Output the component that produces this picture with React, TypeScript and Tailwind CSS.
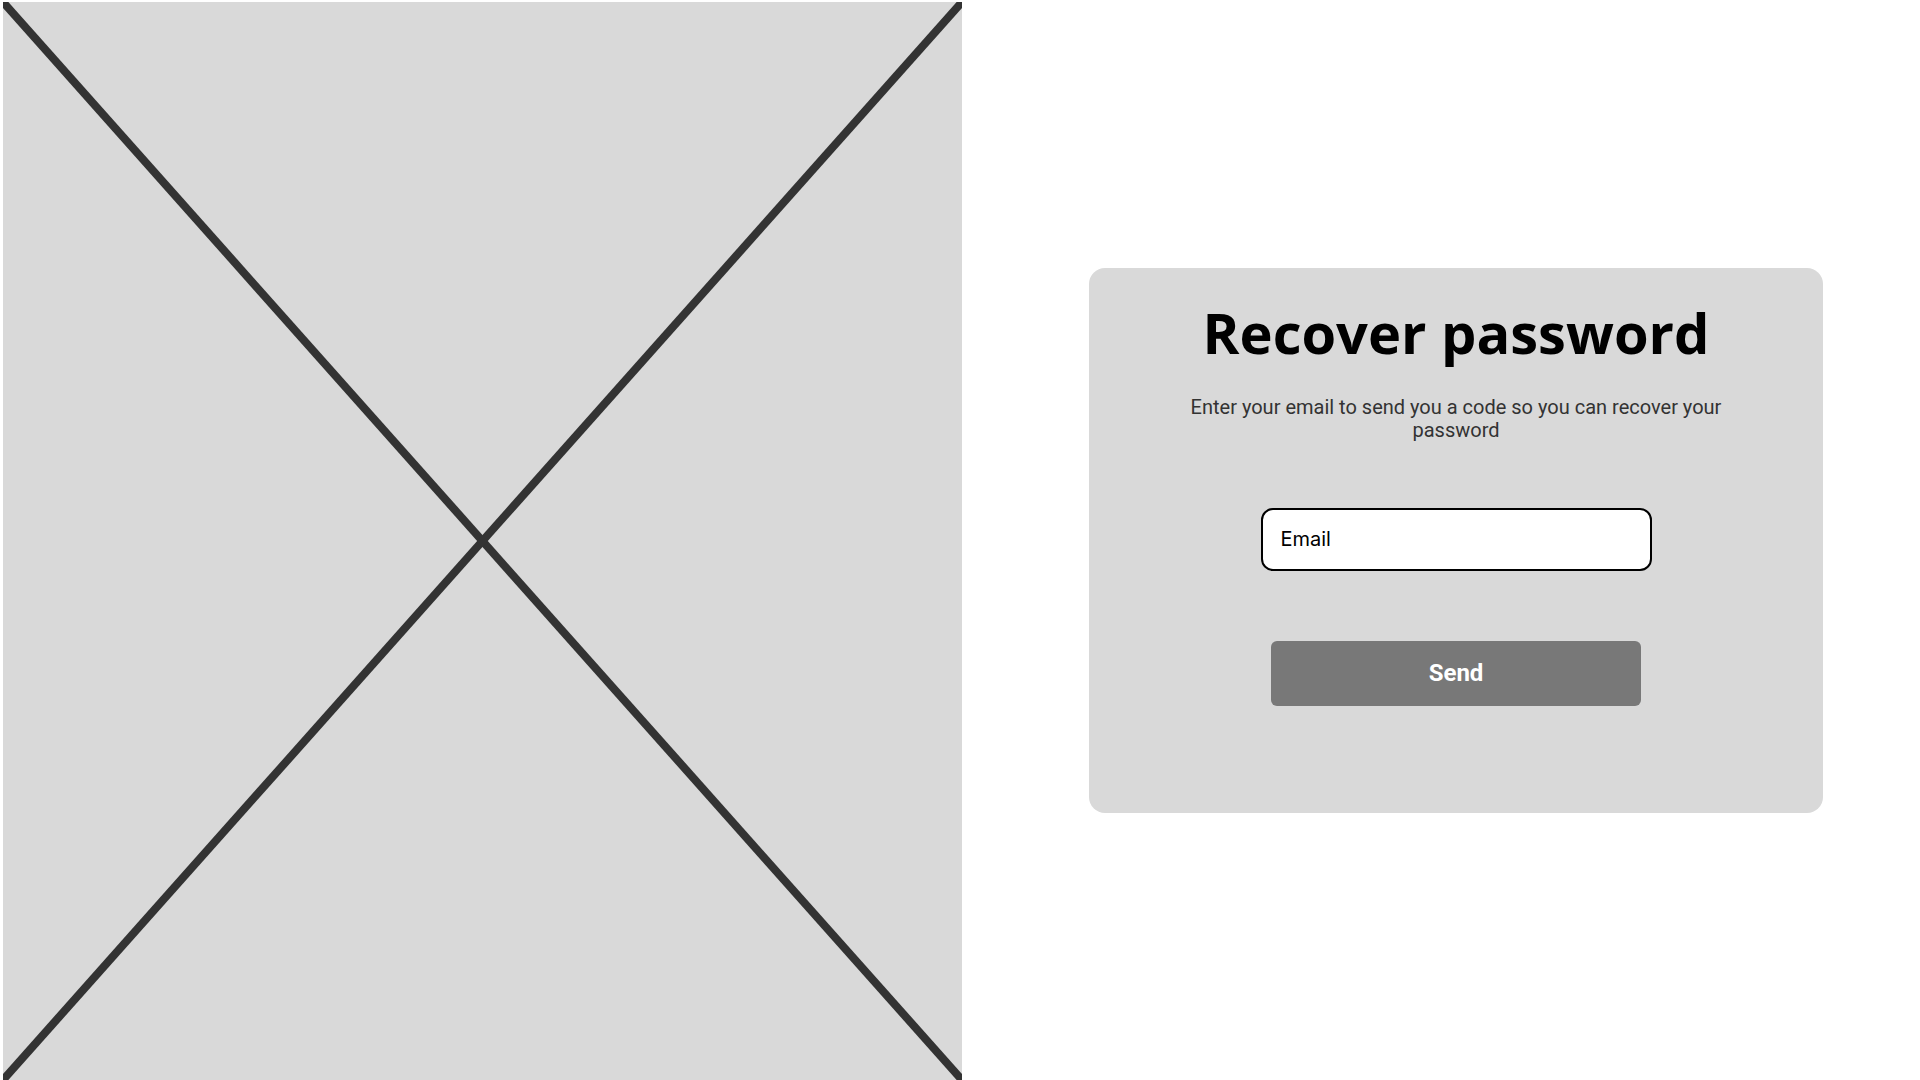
import React from "react";

export default function App() {
  return (
    <div className="flex h-[1080px] w-[1920px] bg-white overflow-hidden">
      <div className="ml-[3px] mt-[2px] h-[1078px] w-[959px] shrink-0 bg-[#d9d9d9] overflow-hidden">
        <svg width="959" height="1078" viewBox="0 0 959 1078" className="block">
          <line x1="0" y1="0" x2="959" y2="1078" stroke="#333333" strokeWidth="8" />
          <line x1="959" y1="0" x2="0" y2="1078" stroke="#333333" strokeWidth="8" />
        </svg>
      </div>
      <div className="flex flex-1 items-center pl-[127px]">
        <div className="flex h-[545px] w-[734px] flex-col items-center rounded-2xl bg-[#d9d9d9] pt-[36px]">
          <h1 className="font-['Open_Sans',sans-serif] text-[56px] font-bold leading-none text-black">
            Recover password
          </h1>
          <p className="mt-[36px] w-[540px] text-center font-['Roboto',sans-serif] text-[20px] leading-[23px] text-[#333333]">
            Enter your email to send you a code so you can recover your password
          </p>
          <input
            type="email"
            placeholder="Email"
            className="mt-[66px] h-[63px] w-[391px] rounded-xl border-2 border-black bg-white px-[18px] font-['Inter',sans-serif] text-[20px] text-black outline-none placeholder:text-black"
          />
          <button className="mt-[70px] h-[65px] w-[370px] rounded-md bg-[#787878] font-['Roboto',sans-serif] text-[24px] font-bold text-white">
            Send
          </button>
        </div>
      </div>
    </div>
  );
}
